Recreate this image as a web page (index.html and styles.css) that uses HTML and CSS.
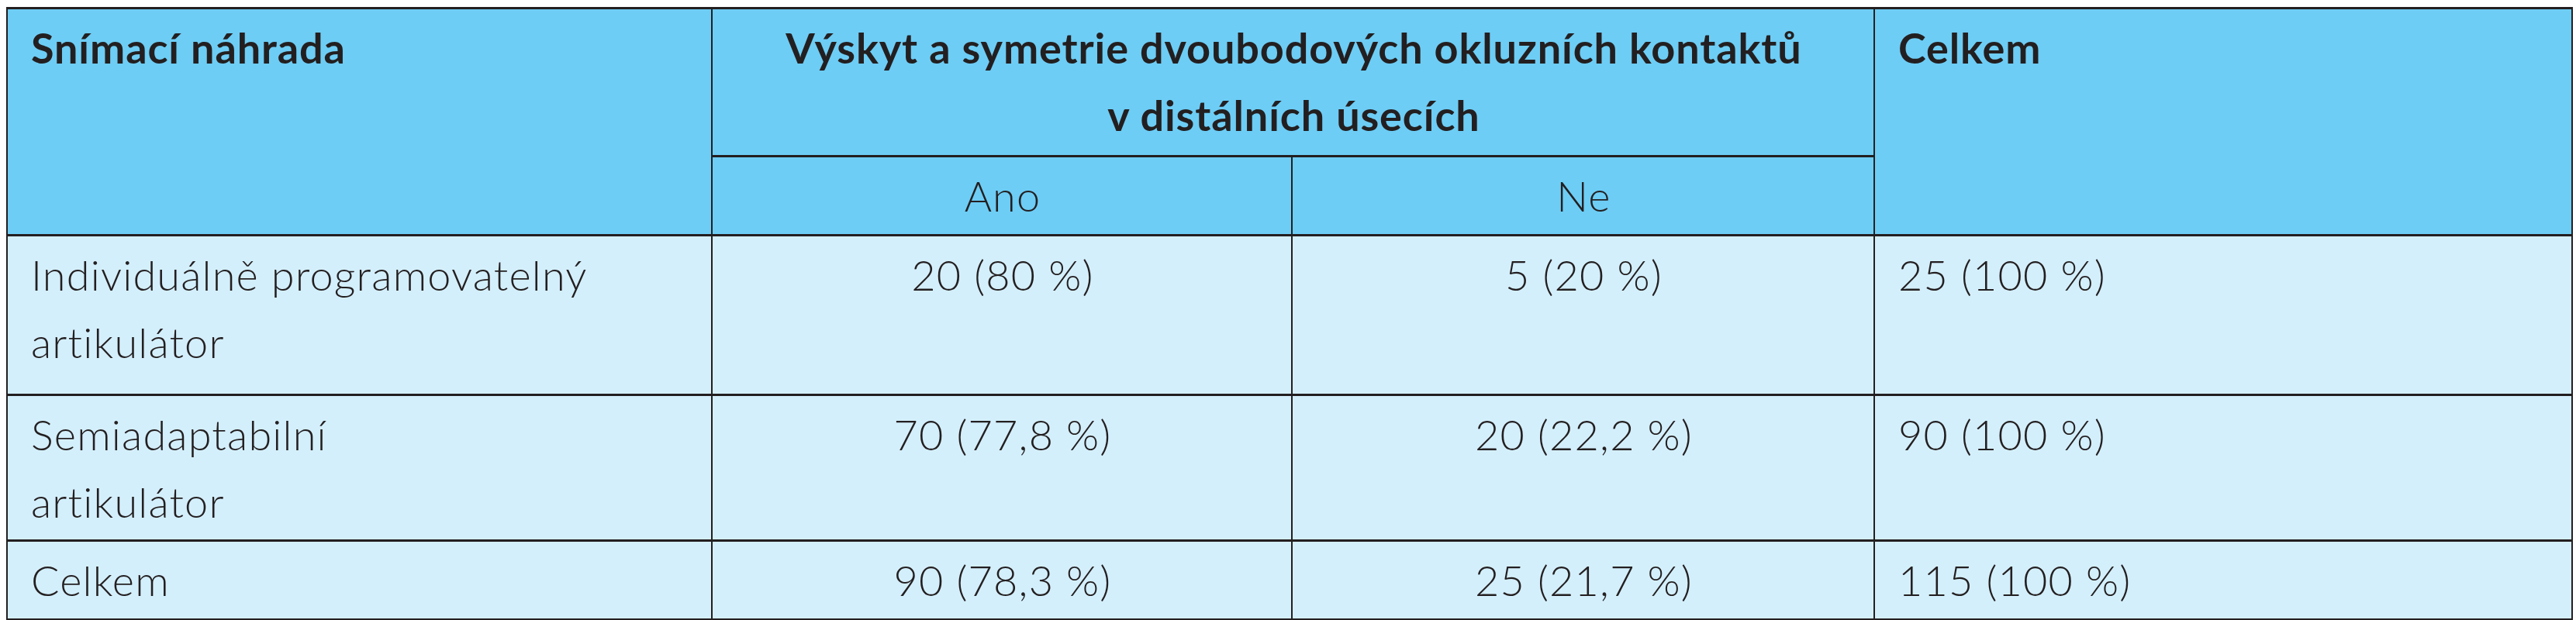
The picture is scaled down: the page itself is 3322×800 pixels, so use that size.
FILE: index.html
```html
<!DOCTYPE html>
<html lang="cs">
<head>
<meta charset="utf-8">
<title>Tabulka</title>
<link rel="stylesheet" href="styles.css">
</head>
<body>
<div class="wrap">
<table class="tbl">
  <colgroup>
    <col class="c1"><col class="c2"><col class="c3"><col class="c4">
  </colgroup>
  <thead>
    <tr class="h1">
      <th rowspan="2" class="left">Snímací náhrada</th>
      <th colspan="2" class="center">Výskyt a symetrie dvoubodových okluzních kontaktů<br>v distálních úsecích</th>
      <th rowspan="2" class="left">Celkem</th>
    </tr>
    <tr class="h2">
      <th class="sub">Ano</th>
      <th class="sub">Ne</th>
    </tr>
  </thead>
  <tbody>
    <tr class="r1">
      <td class="left">Individuálně programovatelný<br>artikulátor</td>
      <td class="center">20 (80 %)</td>
      <td class="center">5 (20 %)</td>
      <td class="left">25 (100 %)</td>
    </tr>
    <tr class="r2">
      <td class="left">Semiadaptabilní<br>artikulátor</td>
      <td class="center">70 (77,8 %)</td>
      <td class="center">20 (22,2 %)</td>
      <td class="left">90 (100 %)</td>
    </tr>
    <tr class="r3">
      <td class="left">Celkem</td>
      <td class="center">90 (78,3 %)</td>
      <td class="center">25 (21,7 %)</td>
      <td class="left">115 (100 %)</td>
    </tr>
  </tbody>
</table>
</div>
</body>
</html>
```
FILE: styles.css
```css
html, body {
  margin: 0;
  padding: 0;
  background: #ffffff;
}
.wrap {
  padding: 9px 0 0 8px;
}
.tbl {
  border-collapse: collapse;
  table-layout: fixed;
  width: 3308px;
  color: #231f20;
  font-family: Lato, "Liberation Sans", sans-serif;
  font-size: 54px;
  line-height: 87px;
}
.c1 { width: 909px; }
.c2 { width: 748px; }
.c3 { width: 751px; }
.c4 { width: 900px; }
.tbl th, .tbl td {
  border-top: 3px solid #231f20;
  border-bottom: 3px solid #231f20;
  border-left: 2px solid #231f20;
  border-right: 2px solid #231f20;
  vertical-align: top;
  padding: 6px 28px 0 30px;
}
.tbl th {
  background: #6dcdf5;
  font-weight: 700;
  letter-spacing: 0.9px;
}
.tbl th.sub {
  font-weight: 300;
  text-align: center;
  letter-spacing: 1.2px;
}
.tbl td {
  background: #d4effc;
  font-weight: 300;
  letter-spacing: 1.2px;
}
.left { text-align: left; }
.center { text-align: center; }
.h1 { height: 191px; }
.h2 { height: 102px; }
.r1 { height: 206px; }
.r2 { height: 188px; }
.r3 { height: 102px; }
```
